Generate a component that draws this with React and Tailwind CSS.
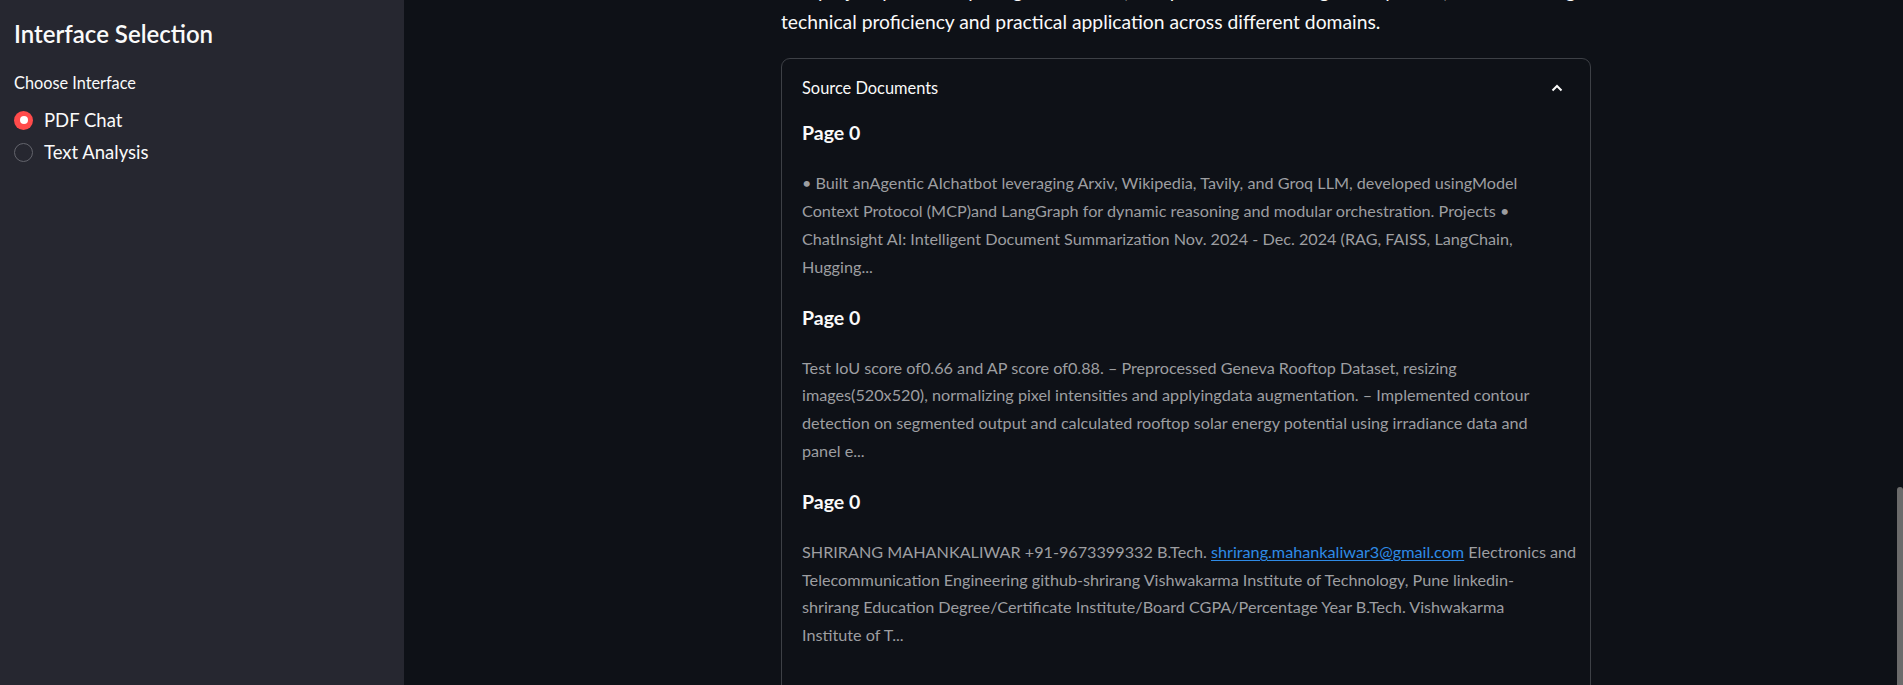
import React, { useState } from 'react';

// Contenuto dei documenti sorgente, una riga per voce come nell'originale
const sources = [
    {
        id: 1,
        title: 'Page 0',
        lines: [
            ['• Built anAgentic AIchatbot leveraging Arxiv, Wikipedia, Tavily, and Groq LLM, developed usingModel'],
            ['Context Protocol (MCP)and LangGraph for dynamic reasoning and modular orchestration. Projects •'],
            ['ChatInsight AI: Intelligent Document Summarization Nov. 2024 - Dec. 2024 (RAG, FAISS, LangChain,'],
            ['Hugging...'],
        ],
    },
    {
        id: 2,
        title: 'Page 0',
        lines: [
            ['Test IoU score of0.66 and AP score of0.88. – Preprocessed Geneva Rooftop Dataset, resizing'],
            ['images(520x520), normalizing pixel intensities and applyingdata augmentation. – Implemented contour'],
            ['detection on segmented output and calculated rooftop solar energy potential using irradiance data and'],
            ['panel e...'],
        ],
    },
    {
        id: 3,
        title: 'Page 0',
        lines: [
            ['SHRIRANG MAHANKALIWAR +91-9673399332 B.Tech. ', 'shrirang.mahankaliwar3@gmail.com', ' Electronics and'],
            ['Telecommunication Engineering github-shrirang Vishwakarma Institute of Technology, Pune linkedin-'],
            ['shrirang Education Degree/Certificate Institute/Board CGPA/Percentage Year B.Tech. Vishwakarma'],
            ['Institute of T...'],
        ],
    },
];

const interfaces = ['PDF Chat', 'Text Analysis'];

const Radio = ({ label, checked, onClick }) => (
    <button onClick={onClick} className="flex items-center h-[32px] gap-[11px] text-left">
        {checked ? (
            <span className="w-[19px] h-[19px] rounded-full bg-[#ff4b4b] flex items-center justify-center">
                <span className="w-[8px] h-[8px] rounded-full bg-white" />
            </span>
        ) : (
            <span className="w-[19px] h-[19px] rounded-full border border-[#63646c]" />
        )}
        <span className="text-[18.5px] leading-[32px] text-[#fafafa]">{label}</span>
    </button>
);

const Line = ({ parts }) => (
    <div className="whitespace-nowrap">
        {parts.map((p, i) =>
            i === 1 ? (
                <a key={i} href="#" className="text-[#2f8be6] underline underline-offset-2">{p}</a>
            ) : (
                <span key={i}>{p}</span>
            )
        )}
    </div>
);

export default function App() {
    const [choice, setChoice] = useState('PDF Chat');
    const [open, setOpen] = useState(true);

    return (
        <div className="h-[685px] flex overflow-hidden bg-[#0e1117] font-['Lato',sans-serif] text-[#fafafa]">
            {/* Sidebar */}
            <aside className="w-[404px] flex-shrink-0 bg-[#262730] px-[14px] pt-[19px]">
                <h2 className="text-[24px] leading-[30px] font-semibold">Interface Selection</h2>
                <p className="mt-[23px] text-[16.3px] leading-[21px]">Choose Interface</p>
                <div className="mt-[11px] flex flex-col">
                    {interfaces.map((name) => (
                        <Radio key={name} label={name} checked={choice === name} onClick={() => setChoice(name)} />
                    ))}
                </div>
            </aside>

            {/* Area principale */}
            <main className="relative flex-1 pl-[377px]">
                <div className="w-[810px]">
                    <p className="-mt-[24px] text-[19.3px] leading-[30.7px] whitespace-nowrap">
                        The project portfolio spans generative AI, computer vision and agentic systems, demonstrating
                        <br />
                        technical proficiency and practical application across different domains.
                    </p>

                    <div className="mt-[21px] border border-[#3d4046] rounded-[9px] pb-[40px]">
                        <button
                            onClick={() => setOpen(!open)}
                            className="w-full h-[58px] flex items-center justify-between pl-[20px] pr-[27px]"
                        >
                            <span className="text-[16.4px]">Source Documents</span>
                            <svg width="12" height="8" viewBox="0 0 12 8" fill="none" className={open ? '' : 'rotate-180'}>
                                <polyline points="1.5,6.5 6,2 10.5,6.5" stroke="#fafafa" strokeWidth="2" />
                            </svg>
                        </button>

                        {open && (
                            <div className="px-[20px] mt-[1px]">
                                {sources.map((doc) => (
                                    <div key={doc.id}>
                                        <h4 className="text-[19.5px] leading-[28px] font-bold pt-[1px] mb-[22px]">{doc.title}</h4>
                                        <div className="text-[16.2px] leading-[27.7px] text-[#9d9ea1] mb-[22.5px]">
                                            {doc.lines.map((parts, i) => (
                                                <Line key={i} parts={parts} />
                                            ))}
                                        </div>
                                    </div>
                                ))}
                            </div>
                        )}
                    </div>
                </div>

                {/* Barra di scorrimento */}
                <div className="absolute right-0 top-[487px] bottom-0 w-[6px] rounded-t-[3px] bg-[#6b6b6b]" />
            </main>
        </div>
    );
}
